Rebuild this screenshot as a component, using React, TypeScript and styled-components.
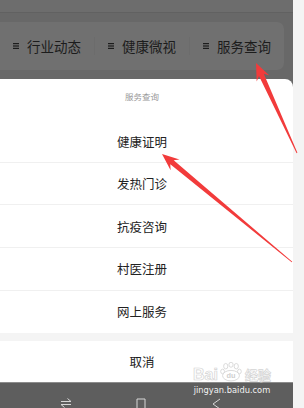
import React from "react";
import styled, { createGlobalStyle } from "styled-components";

const Global = createGlobalStyle`
  html, body { margin: 0; padding: 0; }
  body {
    width: 304px; height: 408px; overflow: hidden;
    background: #f4f4f4;
    font-family: "Noto Sans CJK SC", "Noto Sans", sans-serif;
  }
`;

const Page = styled.div`
  position: relative;
  display: flex;
  width: 304px;
  height: 408px;
`;

const Screen = styled.div`
  width: 293px;
  height: 408px;
  display: flex;
  flex-direction: column;
  background: #686868;
`;

const Side = styled.div`
  flex: 1;
  background: #f4f4f4;
`;

const StatusStrip = styled.div`
  height: 12px;
  background: #6d6d6d;
  border-bottom: 1px solid #616161;
`;

const TabsArea = styled.div`
  padding: 9px 9px 0 0;
  height: 67px;
  box-sizing: border-box;
`;

const TabCard = styled.div`
  height: 48px;
  width: 284px;
  border-radius: 0 7px 7px 0;
  background: #707070;
  display: flex;
  align-items: center;
`;

const Tab = styled.div<{ $divider?: boolean }>`
  flex: 1;
  height: 18px;
  display: flex;
  align-items: center;
  justify-content: center;
  gap: 8px;
  border-left: ${(p) => (p.$divider ? "1px solid #6c6c6c" : "none")};
  font-size: 13.5px;
  color: #1c1c1c;
`;

const Sheet = styled.div`
  flex: 1;
  background: #fff;
  border-radius: 0 8px 0 0;
  display: flex;
  flex-direction: column;
`;

const SheetTitle = styled.div`
  height: 41px;
  box-sizing: border-box;
  padding: 12px 9px 0 0;
  text-align: center;
  font-size: 8.5px;
  line-height: 10px;
  color: #9a9a9a;
`;

const Item = styled.div<{ $last?: boolean }>`
  height: 42.6px;
  box-sizing: border-box;
  padding-right: 9px;
  display: flex;
  align-items: center;
  justify-content: center;
  font-size: 12.5px;
  color: #222;
  border-bottom: ${(p) => (p.$last ? "none" : "1px solid #f0f0f0")};
`;

const Gap = styled.div`
  height: 8px;
  background: #f4f4f4;
`;

const Cancel = styled.div`
  height: 41px;
  box-sizing: border-box;
  padding-right: 9px;
  display: flex;
  align-items: center;
  justify-content: center;
  font-size: 12.5px;
  color: #222;
`;

const NavBar = styled.div`
  height: 26px;
  box-sizing: border-box;
  background: #5e5e5e;
  border-top: 1px solid #8c8c8c;
  display: flex;
  align-items: flex-end;
`;

const NavSlot = styled.div`
  width: 75px;
  display: flex;
  justify-content: center;
`;

const NavSpacer = styled.div`
  width: 28px;
`;

const Watermark = styled.div`
  position: absolute;
  left: 186px;
  top: 362px;
  width: 92px;
  display: flex;
  flex-direction: column;
  align-items: center;
  pointer-events: none;
`;

const LogoRow = styled.div`
  display: flex;
  align-items: flex-end;
  height: 20px;
  font-family: "Liberation Sans", Arial, sans-serif;
  font-weight: bold;
  color: rgba(255, 255, 255, 0.7);
  -webkit-text-stroke: 0.7px #d4d4d4;
  font-size: 16px;
  line-height: 15px;
`;

const LogoCJK = styled.span`
  font-family: "Noto Sans CJK SC", sans-serif;
  font-size: 13px;
  line-height: 15px;
  margin-left: 1px;
`;

const Site = styled.div`
  margin-top: 3px;
  font-family: "DejaVu Sans", "Liberation Sans", sans-serif;
  font-size: 8.3px;
  color: #f2f2f2;
`;

const Overlay = styled.svg`
  position: absolute;
  left: 0;
  top: 0;
  pointer-events: none;
`;

function MenuIcon() {
  return (
    <svg width="6" height="6" viewBox="0 0 6 6">
      <rect x="0" y="0" width="6" height="1.2" fill="#1c1c1c" />
      <rect x="0" y="2.4" width="6" height="1.2" fill="#1c1c1c" />
      <rect x="0" y="4.8" width="6" height="1.2" fill="#1c1c1c" />
    </svg>
  );
}

function arrowPoints(tx: number, ty: number, sx: number, sy: number) {
  const dx = tx - sx;
  const dy = ty - sy;
  const len = Math.hypot(dx, dy);
  const ux = dx / len;
  const uy = dy / len;
  const nx = -uy;
  const ny = ux;
  const h = 17;
  const w = 7;
  const hx = tx - ux * h;
  const hy = ty - uy * h;
  const nxx = tx - ux * (h - 4);
  const nyy = ty - uy * (h - 4);
  const pts: [number, number][] = [
    [tx, ty],
    [hx + nx * w, hy + ny * w],
    [nxx + nx * 2.6, nyy + ny * 2.6],
    [sx + nx * 0.4, sy + ny * 0.4],
    [sx - nx * 0.4, sy - ny * 0.4],
    [nxx - nx * 2.6, nyy - ny * 2.6],
    [hx - nx * w, hy - ny * w],
  ];
  return pts.map((p) => `${p[0].toFixed(1)},${p[1].toFixed(1)}`).join(" ");
}

const tabs = ["行业动态", "健康微视", "服务查询"];
const items = ["健康证明", "发热门诊", "抗疫咨询", "村医注册", "网上服务"];

export default function App() {
  return (
    <>
      <Global />
      <Page>
        <Screen>
          <StatusStrip />
          <TabsArea>
            <TabCard>
              {tabs.map((t, i) => (
                <Tab key={t} $divider={i > 0}>
                  <MenuIcon />
                  <span>{t}</span>
                </Tab>
              ))}
            </TabCard>
          </TabsArea>
          <Sheet>
            <SheetTitle>服务查询</SheetTitle>
            {items.map((t, i) => (
              <Item key={t} $last={i === items.length - 1}>
                {t}
              </Item>
            ))}
            <Gap />
            <Cancel>取消</Cancel>
          </Sheet>
          <NavBar>
            <NavSpacer />
            <NavSlot>
              <svg width="12" height="10" viewBox="0 0 12 10">
                <path d="M1 3.5 H11 M7.5 0.5 L11 3.5 M11 6.5 H1 M4.5 9.5 L1 6.5" stroke="#d6d6d6" strokeWidth="1" fill="none" />
              </svg>
            </NavSlot>
            <NavSlot>
              <svg width="10" height="10" viewBox="0 0 10 10">
                <path d="M1 10 V1 H9 V10" stroke="#d6d6d6" strokeWidth="1" fill="none" />
              </svg>
            </NavSlot>
            <NavSlot>
              <svg width="10" height="10" viewBox="0 0 10 10">
                <path d="M9 1 L2 6 L9 11" stroke="#d6d6d6" strokeWidth="1" fill="none" />
              </svg>
            </NavSlot>
          </NavBar>
        </Screen>
        <Side />
        <Watermark>
          <LogoRow>
            <span>Bai</span>
            <svg width="26" height="20" viewBox="0 0 22 19">
              <g fill="none" stroke="#d4d4d4" strokeWidth="0.8">
                <ellipse cx="6" cy="4" rx="2" ry="2.6" />
                <ellipse cx="11" cy="2.6" rx="2" ry="2.4" />
                <ellipse cx="16" cy="4" rx="2" ry="2.6" />
                <ellipse cx="3" cy="9" rx="1.8" ry="2.2" />
                <ellipse cx="19" cy="9" rx="1.8" ry="2.2" />
              </g>
              <ellipse cx="11" cy="13" rx="8" ry="5" fill="rgba(255,255,255,0.8)" stroke="#d4d4d4" strokeWidth="0.8" />
              <text x="11" y="15.5" textAnchor="middle" fontSize="7" fontFamily="Liberation Sans, Arial, sans-serif" fontWeight="bold" fill="#cfcfcf">du</text>
            </svg>
            <LogoCJK>经验</LogoCJK>
          </LogoRow>
          <Site>jingyan.baidu.com</Site>
        </Watermark>
        <Overlay width="304" height="408" viewBox="0 0 304 408">
          <polygon points={arrowPoints(256, 63, 297, 153)} fill="#f23b3b" />
          <polygon points={arrowPoints(162, 154, 292, 262)} fill="#f23b3b" />
        </Overlay>
      </Page>
    </>
  );
}
